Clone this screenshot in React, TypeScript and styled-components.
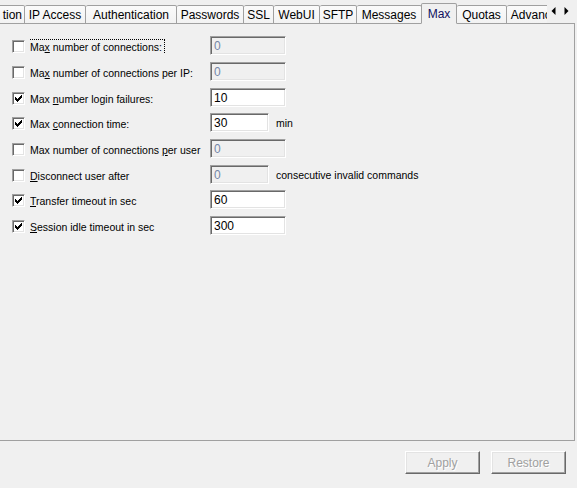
import { FC, ReactNode } from "react";
import styled, { createGlobalStyle, css } from "styled-components";

const GlobalStyle = createGlobalStyle`
	html, body {
		margin: 0;
		padding: 0;
		background: #f0f0f0;
	}
	body {
		font-family: "Liberation Sans", Arial, sans-serif;
		font-size: 11px;
		color: #000;
	}
`;

interface TabType {
	label: string;
	width: number;
	active?: boolean;
	first?: boolean;
}

const tabs: TabType[] = [
	{ label: "tion", width: 25, first: true },
	{ label: "IP Access", width: 61 },
	{ label: "Authentication", width: 91 },
	{ label: "Passwords", width: 67 },
	{ label: "SSL", width: 30 },
	{ label: "WebUI", width: 46 },
	{ label: "SFTP", width: 37 },
	{ label: "Messages", width: 65 },
	{ label: "Max", width: 35, active: true },
	{ label: "Quotas", width: 50 },
	{ label: "Advanced", width: 62 },
];

interface RowType {
	checked: boolean;
	enabled: boolean;
	pre: string;
	key_: string;
	post: string;
	value: string;
	inputWidth: number;
	suffix?: string;
	focused?: boolean;
}

const rows: RowType[] = [
	{ checked: false, enabled: false, pre: "Ma", key_: "x", post: " number of connections:", value: "0", inputWidth: 76, focused: true },
	{ checked: false, enabled: false, pre: "Ma", key_: "x", post: " number of connections per IP:", value: "0", inputWidth: 76 },
	{ checked: true, enabled: true, pre: "Max ", key_: "n", post: "umber login failures:", value: "10", inputWidth: 76 },
	{ checked: true, enabled: true, pre: "Max ", key_: "c", post: "onnection time:", value: "30", inputWidth: 59, suffix: "min" },
	{ checked: false, enabled: false, pre: "Max number of connections ", key_: "p", post: "er user", value: "0", inputWidth: 76 },
	{ checked: false, enabled: false, pre: "", key_: "D", post: "isconnect user after", value: "0", inputWidth: 59, suffix: "consecutive invalid commands" },
	{ checked: true, enabled: true, pre: "", key_: "T", post: "ransfer timeout in sec", value: "60", inputWidth: 76 },
	{ checked: true, enabled: true, pre: "", key_: "S", post: "ession idle timeout in sec", value: "300", inputWidth: 76 },
];

// classic 7x7 pixel check mark
const CheckMark: FC = () => (
	<svg width='7' height='7' viewBox='0 0 7 7' shapeRendering='crispEdges'>
		<path
			d='M6 0h1v3h-1v1h-1v1h-1v1h-1v1h-1v-1h-1v-1h-1v-3h1v1h1v1h1v-1h1v-1h1v-1h1z'
			fill='#000'
		/>
	</svg>
);

const Arrow: FC<{ dir: "left" | "right" }> = ({ dir }) => (
	<svg width='5' height='8' viewBox='0 0 5 8'>
		{dir === "left" ? (
			<path d='M4.5 0 L4.5 8 L0.5 4 Z' fill='#000' />
		) : (
			<path d='M0.5 0 L0.5 8 L4.5 4 Z' fill='#000' />
		)}
	</svg>
);

const SettingRow: FC<{ row: RowType }> = ({ row }) => (
	<Row>
		<Check>{row.checked && <CheckMark />}</Check>
		<Label>
			<LabelText $focused={row.focused}>
				{row.pre}
				<U>{row.key_}</U>
				{row.post}
			</LabelText>
		</Label>
		<Field $width={row.inputWidth} $enabled={row.enabled}>
			{row.value}
		</Field>
		{row.suffix && <Suffix>{row.suffix}</Suffix>}
	</Row>
);

const ButtonLabel: FC<{ children: ReactNode }> = ({ children }) => (
	<Button disabled>{children}</Button>
);

const App: FC = () => {
	return (
		<>
			<GlobalStyle />
			<Window>
				<TabStrip>
					<TabTrack>
						{tabs.map((t) => (
							<Tab key={t.label} $width={t.width} $active={t.active} $first={t.first}>
								{t.label}
							</Tab>
						))}
					</TabTrack>
					<Scroller>
						<Arrow dir='left' />
						<Arrow dir='right' />
					</Scroller>
				</TabStrip>

				<Panel>
					<Form>
						{rows.map((r, i) => (
							<SettingRow key={i} row={r} />
						))}
					</Form>
				</Panel>

				<Footer>
					<ButtonLabel>Apply</ButtonLabel>
					<ButtonLabel>Restore</ButtonLabel>
				</Footer>
			</Window>
		</>
	);
};

const Window = styled.div`
	width: 577px;
	height: 488px;
	display: flex;
	flex-direction: column;
	background: #f0f0f0;
	overflow: hidden;
`;

const TabStrip = styled.div`
	width: 575px;
	height: 24px;
	display: flex;
	align-items: flex-end;
	flex-shrink: 0;
`;

const TabTrack = styled.div`
	flex: 1;
	height: 24px;
	display: flex;
	align-items: flex-end;
	overflow: hidden;
	white-space: nowrap;
`;

const Tab = styled.div<{ $width: number; $active?: boolean; $first?: boolean }>`
	flex: 0 0 ${(p) => p.$width}px;
	height: 19px;
	box-sizing: border-box;
	display: flex;
	align-items: center;
	justify-content: center;
	padding-top: 1px;
	font-size: 12px;
	color: #000;
	overflow: hidden;
	background: linear-gradient(#fbfbfb, #f2f2f2);
	border-top: 1px solid #a0a0a0;
	border-right: 1px solid #a0a0a0;
	border-bottom: 1px solid #a0a0a0;
	border-radius: 2px 2px 0 0;

	${(p) =>
		p.$first &&
		css`
			justify-content: flex-end;
			padding-right: 2px;
			border-radius: 0 2px 0 0;
		`}

	${(p) =>
		p.$active &&
		css`
			height: 21px;
			background: #f0f0f0;
			border-left: 1px solid #a0a0a0;
			border-bottom: 1px solid transparent;
			margin-left: -1px;
			flex-basis: ${p.$width + 1}px;
			color: #101060;
			padding-bottom: 1px;
		`}
`;

const Scroller = styled.div`
	flex: 0 0 28px;
	height: 24px;
	box-sizing: border-box;
	display: flex;
	align-items: flex-start;
	justify-content: center;
	gap: 8px;
	padding-top: 7px;
	padding-right: 2px;
	background: #f0f0f0;
	border-bottom: 1px solid #a0a0a0;
`;

const Panel = styled.div`
	width: 575px;
	height: 417px;
	box-sizing: border-box;
	flex-shrink: 0;
	border-right: 1px solid #a0a0a0;
	border-bottom: 1px solid #a0a0a0;
`;

const Form = styled.div`
	display: grid;
	grid-auto-rows: 25.7px;
	padding: 9px 0 0 12px;
	font-size: 10.5px;
`;

const Row = styled.div`
	display: flex;
	align-items: center;
`;

const Check = styled.div`
	width: 13px;
	height: 13px;
	box-sizing: border-box;
	margin-right: 5px;
	margin-top: 2px;
	display: flex;
	align-items: center;
	justify-content: center;
	background: #fff;
	border: 1px solid;
	border-color: #a0a0a0 #ffffff #ffffff #a0a0a0;
	box-shadow: inset 1px 1px #696969, inset -1px -1px #e3e3e3;
	flex-shrink: 0;
`;

const Label = styled.div`
	width: 176px;
	margin-right: 4px;
	overflow: hidden;
	white-space: nowrap;
	padding: 1px 0 0 0;
	margin-top: 2px;
	flex-shrink: 0;
`;

const LabelText = styled.span<{ $focused?: boolean }>`
	display: inline-block;
	padding: 1px 2px 1px 1px;
	margin-left: -1px;
	outline: ${(p) => (p.$focused ? "1px dotted #000" : "none")};
	outline-offset: 0;
`;

const U = styled.span`
	text-decoration: underline;
	text-underline-offset: 1px;
`;

const Field = styled.div<{ $width: number; $enabled: boolean }>`
	width: ${(p) => p.$width}px;
	height: 19px;
	box-sizing: border-box;
	flex-shrink: 0;
	display: flex;
	align-items: center;
	padding: 1px 0 0 3px;
	font-size: 12px;
	border: 1px solid;
	border-color: #a0a0a0 #ffffff #ffffff #a0a0a0;
	box-shadow: inset 1px 1px #696969, inset -1px -1px #e3e3e3;
	background: ${(p) => (p.$enabled ? "#fff" : "#f0f0f0")};
	color: ${(p) => (p.$enabled ? "#000" : "#7486a6")};
`;

const Suffix = styled.span`
	margin-left: 7px;
	margin-top: 1px;
	white-space: nowrap;
`;

const Footer = styled.div`
	flex: 1;
	display: flex;
	justify-content: flex-end;
	align-items: flex-start;
	gap: 11px;
	padding: 10px 11px 0 0;
`;

const Button = styled.button`
	width: 75px;
	height: 23px;
	box-sizing: border-box;
	padding: 0;
	font-family: "Liberation Sans", Arial, sans-serif;
	font-size: 12px;
	background: #f0f0f0;
	color: #a0a0a0;
	text-shadow: 1px 1px 0 #fff;
	border: 1px solid;
	border-color: #ffffff #696969 #696969 #ffffff;
	box-shadow: inset -1px -1px #a0a0a0, inset 1px 1px #e3e3e3;
	border-radius: 0;
`;

export default App;
